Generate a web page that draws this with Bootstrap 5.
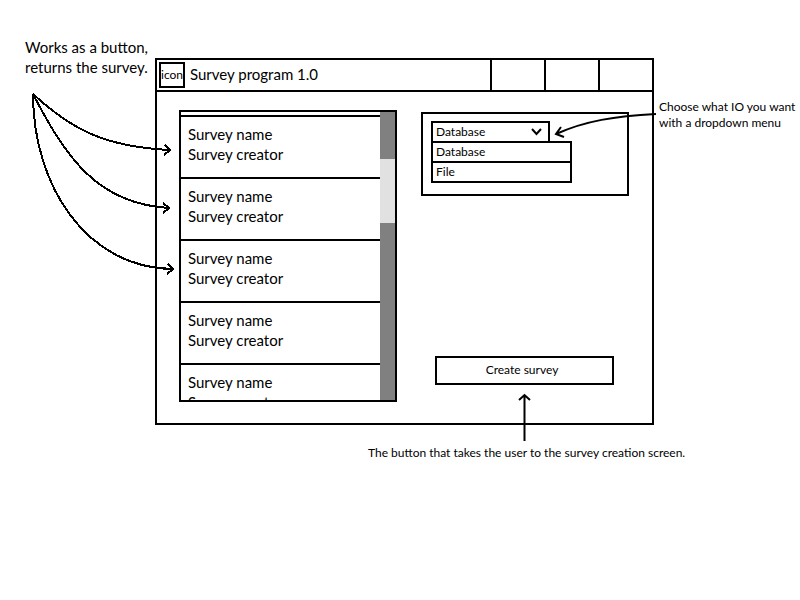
<!DOCTYPE html>
<html lang="en">
<head>
<meta charset="utf-8">
<meta name="viewport" content="width=device-width, initial-scale=1">
<title>Survey program 1.0</title>
<link href="https://cdn.jsdelivr.net/npm/bootstrap@5.3.0/dist/css/bootstrap.min.css" rel="stylesheet">
<style>
  body { font-family: Lato, "Open Sans", sans-serif; font-size: 15px; line-height: 20px; color: #000; background: #fff; }
  button, select { font: inherit; color: #000; background: #fff; }
  .ink { border: 2px solid #000; border-radius: 0; }
  .wireframe { display: grid; grid-template-columns: 155px minmax(0, 1fr) 146px; }
  .note-left { padding: 37px 0 0 25px; }
  .note-right { padding: 99px 0 0 5px; font-size: 12px; line-height: 16px; }
  .note-bottom { grid-column: 2 / 4; padding: 18px 0 0 213px; font-size: 12px; }
  .app-window { margin-top: 58px; }
  .title-bar { height: 32px; border-bottom: 2px solid #000; }
  .app-icon { width: 26px; height: 26px; margin: 2px 5px 2px 2px; font-size: 12px; line-height: 20px; }
  .app-title { padding-bottom: 2px; }
  .window-control { width: 54px; border: 0; border-left: 2px solid #000; }
  .window-body { padding: 18px 23px 21px 22px; gap: 24px; }
  .survey-list { width: 218px; height: 292px; }
  .survey-items { padding-top: 3px; }
  .survey-item { border: 0; border-top: 2px solid #000; padding: 7px 7px 13px; }
  .scroll-track { width: 15px; background: #808080; padding-top: 47px; }
  .scroll-thumb { height: 64px; background: #e1e1e1; }
  .side { padding-top: 2px; padding-bottom: 17px; font-size: 12px; }
  .io-panel { height: 84px; padding: 7px 8px; }
  .io-picker { width: 119px; }
  .io-select { height: 22px; padding: 0 3px; appearance: none; line-height: 18px; }
  .io-chevron { right: 7px; top: 6px; }
  .io-menu { width: 141px; margin-top: -2px; }
  .io-option { padding: 0 3px; border: 0; line-height: 18px; }
  .io-option + .io-option { border-top: 2px solid #000; }
  .create-wrap { margin: 0 15px 0 14px; }
  .create-button { height: 29px; padding: 0 5px 2px 0; line-height: 18px; }
  .arrow { fill: none; stroke: #000; stroke-width: 2; pointer-events: none; z-index: 2; }
  .arrow-left { left: 0; top: 0; }
  .arrow-right { right: 140px; top: 104px; }
  .arrow-up { left: 81px; top: 36px; }
</style>
<script src="https://cdn.jsdelivr.net/npm/bootstrap@5.3.0/dist/js/bootstrap.bundle.min.js"></script>
</head>
<body>
<div class="wireframe position-relative">
  <aside class="note-left text-nowrap">Works as a button,<br>returns the survey.</aside>

  <main class="app-window ink d-flex flex-column">
    <header class="title-bar d-flex">
      <div class="app-icon ink d-flex justify-content-center align-items-center flex-shrink-0">icon</div>
      <div class="app-title flex-grow-1 align-self-center">Survey program 1.0</div>
      <button class="window-control" type="button" aria-label="Minimize"></button>
      <button class="window-control" type="button" aria-label="Maximize"></button>
      <button class="window-control" type="button" aria-label="Close"></button>
    </header>
    <div class="window-body d-flex">
      <section class="survey-list ink d-flex flex-shrink-0 overflow-hidden">
        <div class="survey-items flex-grow-1">
          <button class="survey-item d-block w-100 text-start" type="button">Survey name<br>Survey creator</button>
          <button class="survey-item d-block w-100 text-start" type="button">Survey name<br>Survey creator</button>
          <button class="survey-item d-block w-100 text-start" type="button">Survey name<br>Survey creator</button>
          <button class="survey-item d-block w-100 text-start" type="button">Survey name<br>Survey creator</button>
          <button class="survey-item d-block w-100 text-start" type="button">Survey name<br>Survey creator</button>
        </div>
        <div class="scroll-track"><div class="scroll-thumb"></div></div>
      </section>
      <section class="side d-flex flex-column justify-content-between flex-grow-1">
        <div class="io-panel ink">
          <div class="io-picker position-relative">
            <select class="io-select ink d-block w-100" aria-label="Survey storage">
              <option>Database</option>
              <option>File</option>
            </select>
            <svg class="io-chevron arrow position-absolute" width="13" height="10" viewBox="0 0 13 10"><path d="M2 2L6.500 7L11 2"/></svg>
          </div>
          <div class="io-menu ink">
            <button class="io-option d-block w-100 text-start" type="button">Database</button>
            <button class="io-option d-block w-100 text-start" type="button">File</button>
          </div>
        </div>
        <div class="create-wrap position-relative">
          <button class="create-button ink w-100" type="button">Create survey</button>
          <svg class="arrow arrow-up position-absolute" width="16" height="50" viewBox="0 0 16 50"><path d="M8.500 49V3M3 8L8.500 3L14 8"/></svg>
        </div>
      </section>
    </div>
  </main>

  <aside class="note-right text-nowrap">Choose what IO you want<br>with a dropdown menu</aside>
  <aside class="note-bottom text-nowrap">The button that takes the user to the survey creation screen.</aside>

  <svg class="arrow arrow-left position-absolute" width="180" height="280" viewBox="0 0 180 280" shape-rendering="crispEdges">
    <path d="M33 94C72 130 106 147 170 150M165 145L170 150L164 155"/>
    <path d="M33 94C66 158 98 204 169 208M163 203L169 208L163 213"/>
    <path d="M33 94C33 185 86 268 173 269M168 264L173 269L167 274"/>
  </svg>
  <svg class="arrow arrow-right position-absolute" width="110" height="36" viewBox="550 104 110 36"><path d="M656 114C615 116 585 121 556 134M561 127L556 134L564 137"/></svg>
</div>
</body>
</html>
